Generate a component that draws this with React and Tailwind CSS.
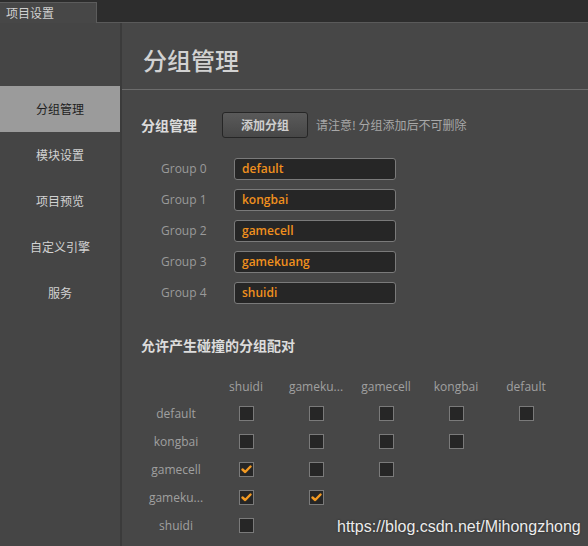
import React from 'react';

const cjk = { fontFamily: '"Noto Sans CJK SC", "Noto Sans", sans-serif' };
const latin = { fontFamily: '"Open Sans", "Noto Sans CJK SC", sans-serif' };

const menu = ['分组管理', '模块设置', '项目预览', '自定义引擎', '服务'];
const groups = ['default', 'kongbai', 'gamecell', 'gamekuang', 'shuidi'];
const cols = ['shuidi', 'gameku...', 'gamecell', 'kongbai', 'default'];
const rows = [
  { name: 'default', boxes: [0, 0, 0, 0, 0] },
  { name: 'kongbai', boxes: [0, 0, 0, 0] },
  { name: 'gamecell', boxes: [1, 0, 0] },
  { name: 'gameku...', boxes: [1, 1] },
  { name: 'shuidi', boxes: [0] },
];

function Box({ checked }) {
  return (
    <div className="w-[15px] h-[15px] border border-[#7a7a7a] bg-[#262626] flex items-center justify-center">
      {checked ? (
        <svg width="11" height="9" viewBox="0 0 11 9">
          <path d="M1.5 4.5 L4.2 7 L9.5 1.5" fill="none" stroke="#f39a22" strokeWidth="2.4" strokeLinecap="round" strokeLinejoin="round" />
        </svg>
      ) : null}
    </div>
  );
}

export default function App() {
  return (
    <div className="relative w-[588px] h-[546px] overflow-hidden bg-[#474747] flex flex-col" style={cjk}>
      {/* tab bar */}
      <div className="h-[23px] bg-[#2d2d2d] border-b border-[#5a5a5a] flex items-end shrink-0">
        <div className="w-[97px] h-[21px] bg-[#474747] border-t border-r border-[#5c5c5c] text-[12px] text-[#d0d0d0] pl-[6px] leading-[20px] -mb-px">
          项目设置
        </div>
      </div>

      <div className="flex flex-1">
        {/* sidebar */}
        <div className="w-[122px] bg-[#454545] border-r-2 border-[#3b3b3b] pt-[63px] shrink-0">
          {menu.map((m, i) => (
            <div
              key={m}
              className={
                'h-[46px] flex items-center justify-center text-[12px] ' +
                (i === 0 ? 'bg-[#9b9b9b] text-[#1e1e1e]' : 'text-[#d2d2d2]')
              }
            >
              {m}
            </div>
          ))}
        </div>

        {/* main */}
        <div className="flex-1">
          <div className="h-[67px] border-b border-[#6c6c6c] flex items-center pl-[21px] pt-[7px] text-[24px] font-medium text-[#d2d2d2]">
            分组管理
          </div>

          <div className="pl-[19px] pt-[22px]">
            <div className="flex items-center h-[26px]">
              <div className="text-[14px] font-bold text-[#dcdcdc] w-[81px]">分组管理</div>
              <button className="h-[26px] w-[86px] rounded-[3px] border border-[#262626] bg-gradient-to-b from-[#5a5a5a] to-[#474747] text-[12px] font-bold text-[#cfcfcf]">
                添加分组
              </button>
              <div className="ml-[8px] text-[12px] text-[#a8a8a8]">请注意! 分组添加后不可删除</div>
            </div>

            <div className="mt-[20px] flex flex-col gap-[9px]">
              {groups.map((g, i) => (
                <div key={g} className="flex items-center h-[22px]">
                  <div className="w-[93px] pl-[20px] text-[12px] text-[#9a9a9a]" style={latin}>
                    Group {i}
                  </div>
                  <div
                    className="w-[162px] h-[22px] rounded-[3px] border border-[#7a7a7a] bg-[#262626] pl-[7px] text-[12px] font-semibold text-[#f0901e] leading-[20px]"
                    style={latin}
                  >
                    {g}
                  </div>
                </div>
              ))}
            </div>

            <div className="mt-[31px] text-[14px] font-bold text-[#dcdcdc] leading-[20px]">允许产生碰撞的分组配对</div>

            <div className="mt-[22px] grid grid-cols-[70px_70px_70px_70px_70px_70px] text-[12px] text-[#a0a0a0]" style={latin}>
              <div className="h-[20px]" />
              {cols.map((c, i) => (
                <div key={i} className="h-[20px] flex items-center justify-center">{c}</div>
              ))}
              {rows.map((r) => (
                <React.Fragment key={r.name}>
                  <div className="h-[28px] flex items-center justify-center pt-[5px]">{r.name}</div>
                  {cols.map((c, j) => (
                    <div key={j} className="h-[28px] flex items-center justify-center pt-[5px]">
                      {j < r.boxes.length ? <Box checked={r.boxes[j]} /> : null}
                    </div>
                  ))}
                </React.Fragment>
              ))}
            </div>
          </div>
        </div>
      </div>

      {/* watermark */}
      <div
        className="absolute left-[337px] top-[515px] text-[16px] text-[#ececec] [text-shadow:0_0_2px_#222]"
        style={{ fontFamily: '"Liberation Sans", Arial, sans-serif' }}
      >
        https://blog.csdn.net/Mihongzhong
      </div>
    </div>
  );
}
